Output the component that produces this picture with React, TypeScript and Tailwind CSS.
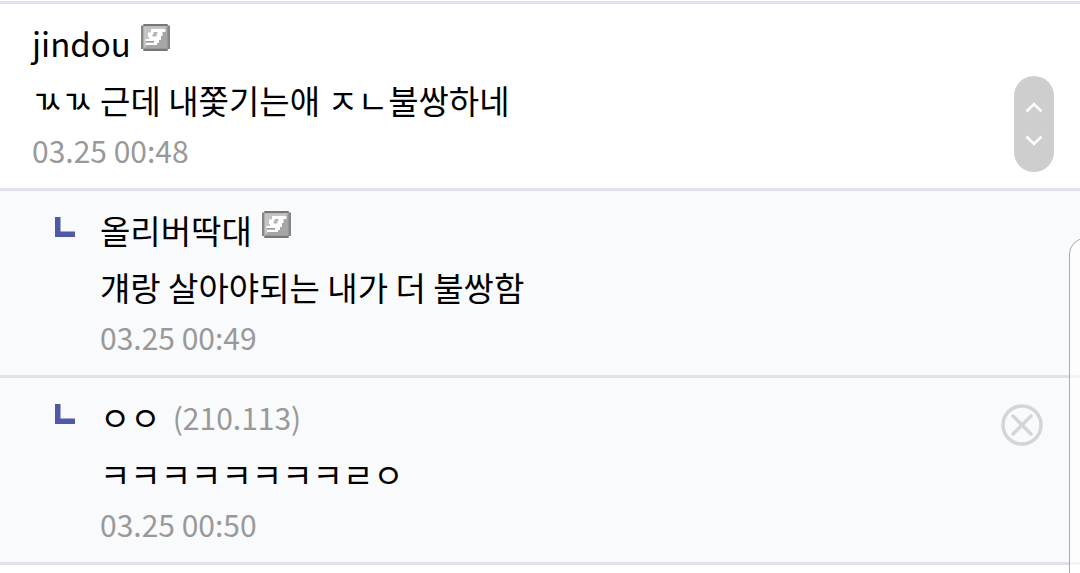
import React from "react";

type Comment = {
  id: number;
  author: string;
  body: string;
  date: string;
  ip?: string;
  member?: boolean;
  reply?: boolean;
  removable?: boolean;
};

const comments: Comment[] = [
  { id: 1, author: "jindou", body: "ㄳㄳ 근데 내쫓기는애 ㅈㄴ불쌍하네", date: "03.25 00:48", member: true },
  { id: 2, author: "올리버딱대", body: "걔랑 살아야되는 내가 더 불쌍함", date: "03.25 00:49", member: true, reply: true },
  { id: 3, author: "ㅇㅇ", ip: "(210.113)", body: "ㅋㅋㅋㅋㅋㅋㅋㅋㄹㅇ", date: "03.25 00:50", reply: true, removable: true },
];

function MemberIcon() {
  return (
    <svg className="mb-3 ml-[10px] h-[27px] w-[29px]" viewBox="0 0 29 27" aria-hidden="true">
      <path d="M2.500 0H26.500V1.500H29V25H26.500V27H2.500V25H0V1.500H2.500Z" fill="#868686" />
      <path d="M2.500 0H26.500V2.300H2.500ZM2.500 24.700H26.500V27H2.500Z" fill="#777" />
      <path d="M2.500 2.300H26.500V24.700H2.500Z" fill="#a6a6a6" />
      <path d="M2.500 2.300H26.500L2.500 24.700Z" fill="#c4c4c4" />
      <path d="M10 5H24.500V8H21.500V12H20V16H18V19H16V21H5V18.500H13V17H4.500V15H8V13H7V8.500H10Z" fill="#fff" />
      <path d="M12.500 8H16.500V10H15.500V12.500H11.500V10H12.500Z" fill="#b5b5b5" />
      <path d="M5 17H13V18.500H5Z" fill="#999" />
    </svg>
  );
}

function CommentRow({ comment }: { comment: Comment }) {
  return (
    <li className={`flex border-t-[3px] border-[#e1e1ed] px-8 pt-[11px] pb-4 ${comment.reply ? "bg-[#f9fafc]" : "bg-white"}`}>
      {comment.reply && (
        <svg className="mt-[15px] mr-[25px] ml-[23px] h-5 w-5 shrink-0" viewBox="0 0 20 20" aria-hidden="true">
          <path d="M0 0H5.500V14.500H20V20H0Z" fill="#5059a5" />
        </svg>
      )}
      <div className="min-w-0 flex-1">
        <div className="flex h-[57px] items-center text-[33px] leading-[57px]">
          <span>{comment.author}</span>
          {comment.member && <MemberIcon />}
          {comment.ip && <span className="ml-3 text-[30px] text-[#999]">{comment.ip}</span>}
        </div>
        <p className="text-[33px] leading-[57px]">{comment.body}</p>
        <time className="block text-[30px] leading-[43px] text-[#999]">{comment.date}</time>
      </div>
      {comment.removable && (
        <button type="button" aria-label="삭제" className="mt-[15px] mr-[5px] h-[42px] w-[42px] shrink-0">
          <svg viewBox="0 0 42 42" fill="none" stroke="#d4d5d6" strokeWidth="3.5" strokeLinecap="round">
            <circle cx="21" cy="21" r="19" />
            <path d="M12 12L30 30M30 12L12 30" />
          </svg>
        </button>
      )}
    </li>
  );
}

export default function App() {
  return (
    <main className="relative min-h-screen overflow-hidden bg-white pt-px font-['Noto_Sans_CJK_KR',sans-serif] text-black">
      <ul className="border-b-[3px] border-[#e1e1ed]">
        {comments.map((c) => (
          <CommentRow key={c.id} comment={c} />
        ))}
      </ul>
      <nav aria-label="스크롤" className="absolute top-[76px] right-[26px] flex h-24 w-10 flex-col rounded-full bg-[#cecece] py-[15px]">
        <button type="button" aria-label="위로" className="flex flex-1 items-center justify-center">
          <svg className="h-4 w-5" viewBox="0 0 20 16" fill="none" stroke="#fff" strokeWidth="2.5">
            <path d="M2.500 11.500L10 4L17.500 11.500" />
          </svg>
        </button>
        <button type="button" aria-label="아래로" className="flex flex-1 items-center justify-center">
          <svg className="h-4 w-5" viewBox="0 0 20 16" fill="none" stroke="#fff" strokeWidth="2.5">
            <path d="M2.500 3.500L10 11L17.500 3.500" />
          </svg>
        </button>
      </nav>
      <aside className="absolute top-[238px] -right-5 -bottom-5 w-[31px] rounded-l-[16px] border border-[#aaa] bg-white/60" />
    </main>
  );
}
